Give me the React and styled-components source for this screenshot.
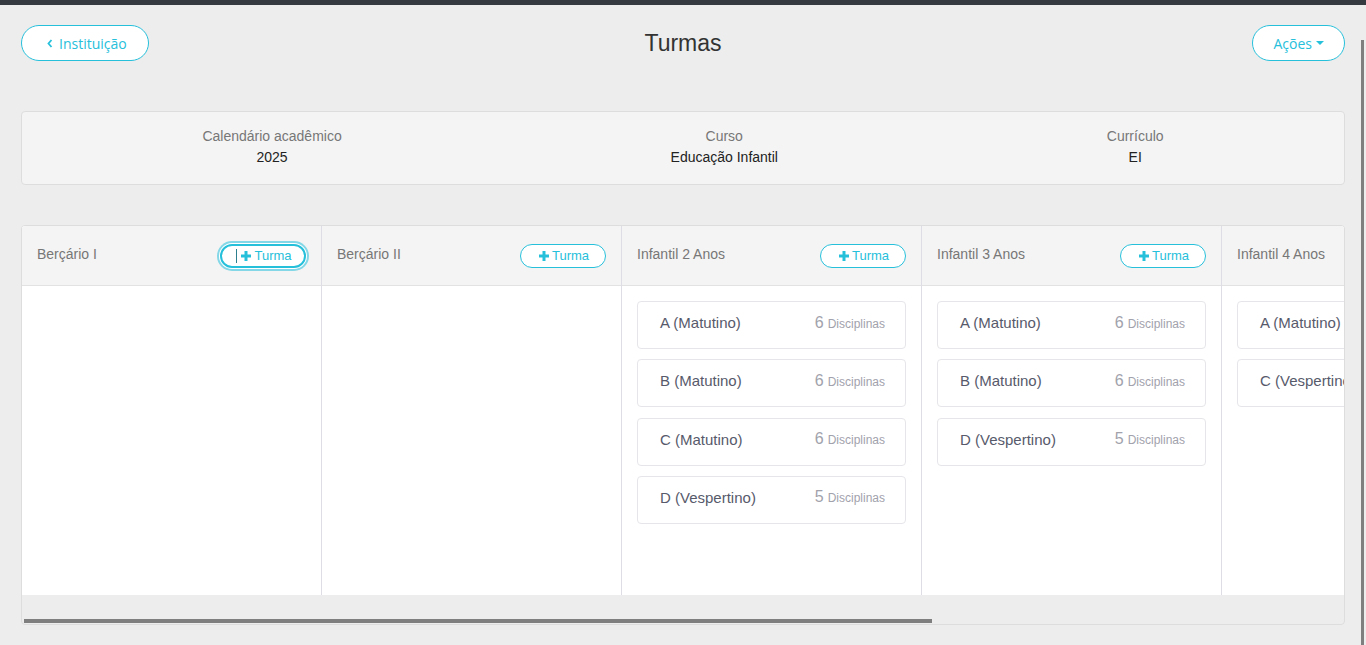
import React from "react"
import styled, { createGlobalStyle, css } from "styled-components"

const CYAN = "#27c0db"

const GlobalStyle = createGlobalStyle`
    html, body {
        margin: 0;
        padding: 0;
        background: #ededed;
        overflow: hidden;
    }
    body {
        font-family: "Liberation Sans", Arial, sans-serif;
    }
    * { box-sizing: border-box; }
`

const TopBar = styled.div`
    height: 5px;
    background: #353a40;
`
// overlay scrollbar of the page, drawn since headless hides the real one
const PageScroll = styled.div`
    position: fixed;
    top: 40px;
    right: 2px;
    bottom: 0;
    width: 3px;
    background: #7f7f7f;
`
const Container = styled.div`
    padding: 20px 21px 0;
`
const Header = styled.div`
    display: grid;
    grid-template-columns: 1fr auto 1fr;
    align-items: center;
    height: 36px;
`
const Title = styled.h1`
    margin: 0;
    font-weight: 400;
    font-size: 23px;
    color: #333;
`
const PillButton = styled.button`
    height: 36px;
    padding: 0 20px;
    border: 1px solid ${CYAN};
    border-radius: 18px;
    background: #fff;
    color: ${CYAN};
    font-family: "Open Sans", sans-serif;
    font-size: 14px;
    display: inline-flex;
    align-items: center;
    gap: 6px;
    justify-self: ${p => p.$align || "start"};
    ${p => p.$back && css`padding: 0 21px 0 25px;`}
`
const Caret = styled.span`
    width: 0;
    height: 0;
    border-left: 4px solid transparent;
    border-right: 4px solid transparent;
    border-top: 4px solid ${CYAN};
    margin-left: -2px;
`

const InfoCard = styled.div`
    margin-top: 50px;
    display: flex;
    justify-content: space-around;
    padding: 14px 16px 16px;
    background: #f4f4f4;
    border: 1px solid #dddddd;
    border-radius: 4px;
`
const InfoItem = styled.div`
    text-align: center;
`
const InfoLabel = styled.div`
    font-size: 14px;
    line-height: 20px;
    color: #777;
`
const InfoValue = styled.div`
    font-size: 14px;
    line-height: 22px;
    color: #222;
`

const Board = styled.div`
    margin-top: 40px;
    border: 1px solid #dddddd;
    border-radius: 4px;
    background: #ededed;
    overflow: hidden;
`
const Track = styled.div`
    display: flex;
`
const ScrollThumb = styled.div`
    margin: 24px 0 1px 2px;
    width: 908px;
    height: 4px;
    background: #7f7f7f;
`
const Column = styled.div`
    flex: 0 0 300px;
    height: 369px;
    border-right: 1px solid #dedde6;
    background: #fff;
    display: flex;
    flex-direction: column;
`
const ColumnHead = styled.div`
    height: 60px;
    padding: 0 15px;
    display: flex;
    align-items: center;
    justify-content: space-between;
    background: #f4f4f4;
    border-bottom: 1px solid #e2e2e2;
`
const ColumnTitle = styled.span`
    font-size: 14px;
    color: #777;
    margin-top: -4px;
    white-space: nowrap;
`
const AddButton = styled.button`
    width: 86px;
    height: 24px;
    border: 1px solid ${CYAN};
    border-radius: 12px;
    background: #fff;
    color: ${CYAN};
    font-family: "Liberation Sans", Arial, sans-serif;
    font-size: 13px;
    display: flex;
    align-items: center;
    justify-content: center;
    gap: 3px;
    padding: 0 0 0 2px;
    ${p => p.$focused && css`
        border-width: 2px;
        box-shadow: 0 0 0 1px #fff, 0 0 0 3px rgba(39, 192, 219, 0.55);
    `}
`
const TextCaret = styled.span`
    width: 1px;
    height: 14px;
    background: #2d7f8d;
    margin-right: 1px;
`
const ColumnBody = styled.div`
    flex: 1;
    padding: 15px;
    display: flex;
    flex-direction: column;
    gap: 10.3px;
`
const ClassCard = styled.div`
    height: 48px;
    flex: 0 0 48px;
    border: 1px solid #e6e6ea;
    border-radius: 4px;
    padding: 0 20px 5px 22px;
    display: flex;
    align-items: center;
    justify-content: space-between;
    white-space: nowrap;
`
const ClassName = styled.span`
    font-size: 15px;
    color: #575a6b;
`
const Count = styled.span`
    color: #a2a2ac;
    font-size: 16px;
    small {
        font-size: 12px;
        margin-left: 4px;
    }
`

const Chevron = () => (
    <svg width="6" height="9" viewBox="0 0 6 9">
        <path d="M4.5 1 L1.5 4.5 L4.5 8" fill="none" stroke={CYAN} strokeWidth="1.8" />
    </svg>
)
const Plus = () => (
    <svg width="10" height="10" viewBox="0 0 10 10">
        <rect x="3.5" y="0" width="3" height="10" fill={CYAN} />
        <rect x="0" y="3.5" width="10" height="3" fill={CYAN} />
    </svg>
)

const columns = [
    { name: "Berçário I", focused: true, turmas: [] },
    { name: "Berçário II", turmas: [] },
    { name: "Infantil 2 Anos", turmas: [["A (Matutino)", 6], ["B (Matutino)", 6], ["C (Matutino)", 6], ["D (Vespertino)", 5]] },
    { name: "Infantil 3 Anos", turmas: [["A (Matutino)", 6], ["B (Matutino)", 6], ["D (Vespertino)", 5]] },
    { name: "Infantil 4 Anos", turmas: [["A (Matutino)", 6], ["C (Vespertino)", 6]] },
]

export default function App() {
    return (
        <>
            <GlobalStyle />
            <TopBar />
            <Container>
                <Header>
                    <PillButton $back><Chevron /> Instituição</PillButton>
                    <Title>Turmas</Title>
                    <PillButton $align="end">Ações <Caret /></PillButton>
                </Header>

                <InfoCard>
                    <InfoItem>
                        <InfoLabel>Calendário acadêmico</InfoLabel>
                        <InfoValue>2025</InfoValue>
                    </InfoItem>
                    <InfoItem>
                        <InfoLabel>Curso</InfoLabel>
                        <InfoValue>Educação Infantil</InfoValue>
                    </InfoItem>
                    <InfoItem>
                        <InfoLabel>Currículo</InfoLabel>
                        <InfoValue>EI</InfoValue>
                    </InfoItem>
                </InfoCard>

                <Board>
                    <Track>
                        {columns.map(col => (
                            <Column key={col.name}>
                                <ColumnHead>
                                    <ColumnTitle>{col.name}</ColumnTitle>
                                    <AddButton $focused={col.focused}>
                                        {col.focused && <TextCaret />}
                                        <Plus />Turma
                                    </AddButton>
                                </ColumnHead>
                                <ColumnBody>
                                    {col.turmas.map(([name, n]) => (
                                        <ClassCard key={name}>
                                            <ClassName>{name}</ClassName>
                                            <Count>{n}<small>Disciplinas</small></Count>
                                        </ClassCard>
                                    ))}
                                </ColumnBody>
                            </Column>
                        ))}
                    </Track>
                    <ScrollThumb />
                </Board>
            </Container>
            <PageScroll />
        </>
    )
}
